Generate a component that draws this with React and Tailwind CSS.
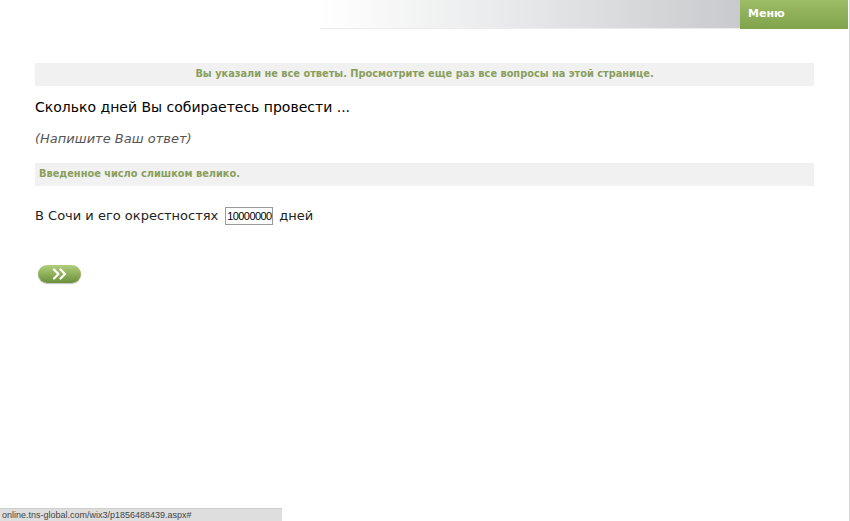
export default function App() {
  return (
    <div className="relative w-[850px] h-[521px] bg-white overflow-hidden border-r border-[#d8d8d8]">
      <div className="flex h-[29px]">
        <div className="w-[320px]" />
        <div className="w-[420px] bg-gradient-to-r from-white via-[#e6e7e8] to-[#c9cacd] border-b border-[#ececec]" />
        <div className="w-[108px] bg-gradient-to-b from-[#9dbd66] to-[#7fa24a] flex items-center pl-[8px] text-white font-bold text-[11px] [font-family:'DejaVu_Sans',sans-serif]">
          Меню
        </div>
      </div>
      <div className="pl-[35px] pr-[35px] pt-[34px]">
        <div className="h-[23px] bg-[#f1f1f1] flex items-center justify-center text-[#8a9e5c] font-bold text-[9.8px] [font-family:'DejaVu_Sans',sans-serif]">
          Вы указали не все ответы. Просмотрите еще раз все вопросы на этой странице.
        </div>
        <div className="mt-[11px] text-[14px] text-black [font-family:'DejaVu_Sans',sans-serif] leading-[20px]">
          Сколько дней Вы собираетесь провести ...
        </div>
        <div className="mt-[12px] text-[13px] italic text-[#555] [font-family:'DejaVu_Sans',sans-serif] leading-[20px]">
          (Напишите Ваш ответ)
        </div>
        <div className="mt-[14px] h-[23px] bg-[#f1f1f1] flex items-center pl-[4px] text-[#8a9e5c] font-bold text-[9.8px] [font-family:'DejaVu_Sans',sans-serif]">
          Введенное число слишком велико.
        </div>
        <div className="mt-[20px] flex items-center text-[13px] text-[#222] [font-family:'DejaVu_Sans',sans-serif] leading-[20px]">
          <span>В Сочи и его окрестностях</span>
          <span className="ml-[7px] w-[48px] h-[18px] border border-[#999] bg-white text-[11px] tracking-[-0.6px] [font-family:'Liberation_Sans',sans-serif] leading-[16px] px-[1px] overflow-hidden whitespace-nowrap text-black">10000000</span>
          <span className="ml-[6px]">дней</span>
        </div>
        <div className="mt-[39px] ml-[3px] w-[43px] h-[18px] rounded-full bg-gradient-to-b from-[#b0cd80] via-[#8fb05a] to-[#6b8f3c] flex items-center justify-center shadow-[0_1px_1px_rgba(0,0,0,0.25)]">
          <svg width="16" height="12" viewBox="0 0 16 12" fill="none" stroke="white" strokeWidth="2.2" strokeLinecap="round" strokeLinejoin="round">
            <path d="M2 1.5 L6.5 6 L2 10.5" />
            <path d="M8.5 1.5 L13 6 L8.5 10.5" />
          </svg>
        </div>
      </div>
      <div className="absolute left-0 bottom-0 w-[282px] h-[13px] bg-[#dedede] border-t border-[#cfcfcf] flex items-center pl-[2px] text-[9px] text-[#444] [font-family:'Liberation_Sans',sans-serif] leading-none">
        online.tns-global.com/wix3/p1856488439.aspx#
      </div>
    </div>
  );
}
